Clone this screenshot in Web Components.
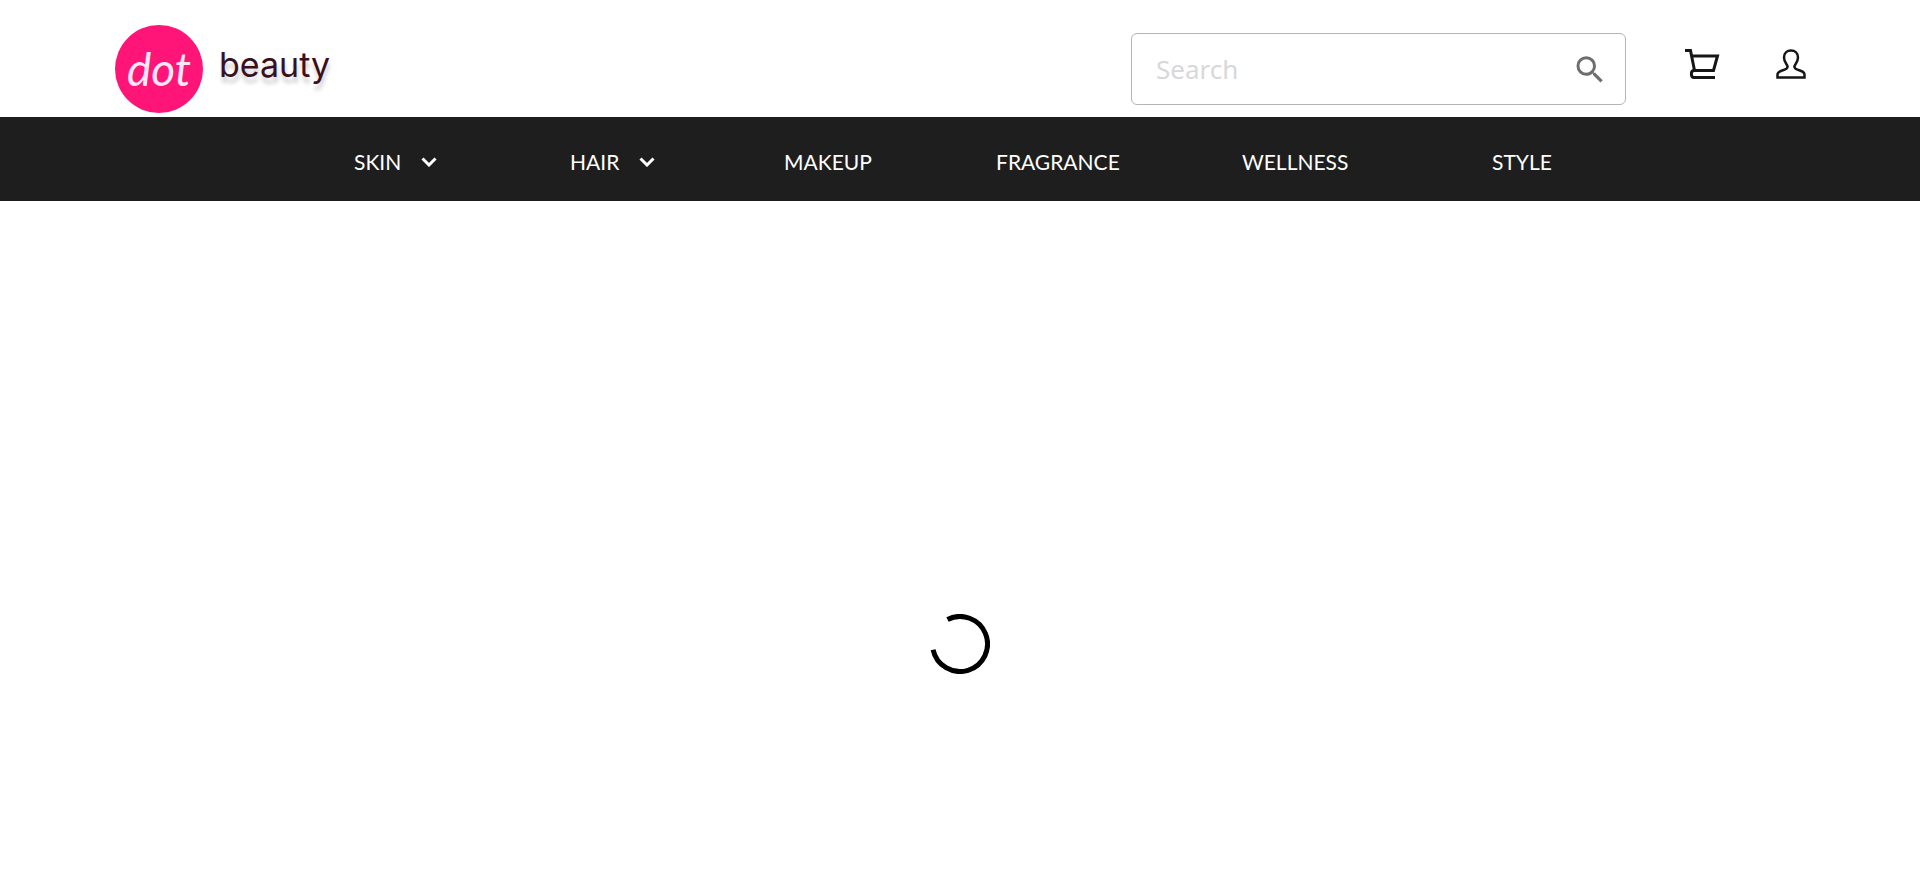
<!DOCTYPE html>
<html lang="en">
<head>
<meta charset="utf-8">
<meta name="viewport" content="width=device-width, initial-scale=1">
<title>dot beauty</title>
<style>
html,body{margin:0;background:#fff}
body{font-family:Lato,"Open Sans",sans-serif}
</style>
</head>
<body>
<beauty-app></beauty-app>
<script>
const define = (name, html) => customElements.define(name, class extends HTMLElement {
  constructor() {
    super();
    const t = document.createElement('template');
    t.innerHTML = html;
    this.attachShadow({mode: 'open'}).append(t.content.cloneNode(true));
  }
});

define('brand-logo', `
<style>
:host{display:block}
a{display:flex;align-items:center;gap:16px;text-decoration:none}
.mark{flex:none;width:88px;height:88px;border-radius:50%;background:#ff1478;color:#fde6f6;display:flex;align-items:center;justify-content:center;font:italic 400 46px/84px Lato,sans-serif}
.name{font:400 34px/40px Inter,sans-serif;color:#3a1020;text-shadow:1px 6px 4px rgba(0,0,0,.2);padding-bottom:8px}
</style>
<a href="#" aria-label="dot beauty"><span class="mark">dot</span><span class="name">beauty</span></a>`);

define('search-box', `
<style>
:host{display:block}
form{display:flex;align-items:center;box-sizing:border-box;height:72px;border:1px solid #b4b4b4;border-radius:6px;padding:0 17px 0 24px;background:#fff}
input{flex:1;min-width:0;border:0;outline:0;padding:0;background:none;color:#333;font:26px/36px "Noto Sans",sans-serif}
input::placeholder{color:#d8d8d8;opacity:1}
button{border:0;background:none;padding:0;width:36px;height:36px}
svg{display:block;fill:#6e6e6e}
</style>
<form><input type="search" placeholder="Search" aria-label="Search">
<button type="button" aria-label="Submit search"><svg width="36" height="36" viewBox="0 0 24 24"><path d="M15.500 14.500h-.79l-.28-.27A6.470 6.470 0 0 0 16 10 6.500 6.500 0 1 0 9.500 16.500c1.610 0 3.090-.59 4.230-1.570l.27.28v.79l5 4.990L20.490 19.500l-4.990-5zm-6 0C7.010 14.500 5 12.490 5 10S7.010 5.500 9.500 5.500 14 7.510 14 10 11.990 14.500 9.500 14.500z"/></svg></button></form>`);

define('header-actions', `
<style>
:host{display:flex;align-items:center;gap:56px}
button{border:0;background:none;padding:0}
svg{display:block;fill:none;stroke:#161616;stroke-width:3}
</style>
<button type="button" aria-label="Cart"><svg width="35" height="30" viewBox="0 0 35 30"><path d="M0 1.500H5.500L9.500 21.500M7 7H32.500L28.500 21.500H9C5.500 21.500 5.500 28.500 9 28.500H30"/></svg></button>
<button type="button" aria-label="Account"><svg width="30" height="30" viewBox="0 0 30 30"><path stroke-width="2.500" d="M1.500 28.500V25.500C1.500 20.500 12 22 11.500 17.500C11.500 15.500 8 13.500 8 8.500C8 4 11 1.500 15 1.500S22 4 22 8.500C22 13.500 18.500 15.500 18.500 17.500C18 22 28.500 20.500 28.500 25.500V28.500Z"/></svg></button>`);

define('nav-item', `
<style>
:host{display:block}
a{display:inline-flex;align-items:center;gap:20px;color:#fff;text-decoration:none;font-size:21px;line-height:28px;white-space:nowrap}
svg{display:none;fill:none;stroke:#fff;stroke-width:3}
:host([menu]) svg{display:block}
</style>
<a href="#"><slot></slot><svg width="16" height="10" viewBox="0 0 16 10"><path d="M1.500 1.500L8 8L14.500 1.500"/></svg></a>`);

define('main-nav', `
<style>
:host{display:block;background:#1e1e1e}
nav{display:grid;grid-template-columns:354fr 216fr 214fr 212fr 246fr 250fr 428fr;align-items:center;height:84px;padding-top:5px;box-sizing:border-box}
nav-item:first-child{grid-column:2}
</style>
<nav aria-label="Categories">
<nav-item menu>SKIN</nav-item><nav-item menu>HAIR</nav-item><nav-item>MAKEUP</nav-item><nav-item>FRAGRANCE</nav-item><nav-item>WELLNESS</nav-item><nav-item>STYLE</nav-item>
</nav>`);

define('loading-spinner', `
<style>
:host{display:block}
svg{display:block;fill:none;stroke:#000;stroke-width:5}
</style>
<svg role="img" aria-label="Loading" width="60" height="60" viewBox="0 0 60 60"><path d="M17.500 5.500A27.500 27.500 0 1 1 3.100 35.700"/></svg>`);

define('beauty-app', `
<style>
:host{display:flex;flex-direction:column;min-height:100vh}
header{display:flex;align-items:center;box-sizing:border-box;padding:20px 114px 0 115px;height:117px}
search-box{flex:0 1 495px;margin-left:auto}
header-actions{margin:0 0 10px 59px}
main{flex:1;display:grid;grid-template-rows:2fr auto 1fr;justify-items:center}
loading-spinner{grid-row:2}
</style>
<header><brand-logo></brand-logo><search-box></search-box><header-actions></header-actions></header>
<main-nav></main-nav>
<main><loading-spinner></loading-spinner></main>`);
</script>
</body>
</html>
